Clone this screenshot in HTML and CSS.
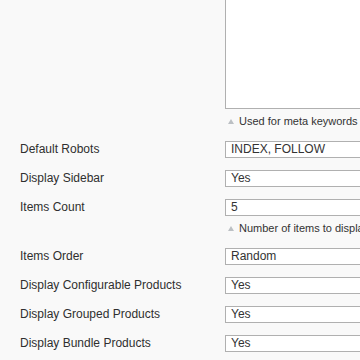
FILE: index.html
```html
<!DOCTYPE html>
<html lang="en">
<head>
  <meta charset="UTF-8">
  <title>Configuration</title>
<link rel="stylesheet" href="styles.css">
</head>
<body>

<div class="form">
  <div class="row">
    <div class="label"></div>
    <div class="field">
      <div class="box textarea"></div>
      <div class="note"><span class="arrow"></span>Used for meta keywords</div>
    </div>
  </div>

  <div class="row">
    <div class="label">Default Robots</div>
    <div class="field"><div class="box">INDEX, FOLLOW</div></div>
  </div>

  <div class="row">
    <div class="label">Display Sidebar</div>
    <div class="field"><div class="box">Yes</div></div>
  </div>

  <div class="row">
    <div class="label">Items Count</div>
    <div class="field">
      <div class="box">5</div>
      <div class="note"><span class="arrow"></span>Number of items to display</div>
    </div>
  </div>

  <div class="row">
    <div class="label">Items Order</div>
    <div class="field"><div class="box">Random</div></div>
  </div>

  <div class="row">
    <div class="label">Display Configurable Products</div>
    <div class="field"><div class="box">Yes</div></div>
  </div>

  <div class="row">
    <div class="label">Display Grouped Products</div>
    <div class="field"><div class="box">Yes</div></div>
  </div>

  <div class="row">
    <div class="label">Display Bundle Products</div>
    <div class="field"><div class="box">Yes</div></div>
  </div>
</div>

</body>
</html>
```

FILE: styles.css
```css
body {
  overflow: hidden;
  margin: 0px;
  background-color: #f9f9f9;
  color: #2f2f2f;
  font-size: 12px;
  font-family: 'Liberation Sans', Arial, sans-serif;
}

.form {
  padding-left: 20px;
  width: 520px;
}

.row {
  display: flex;
  align-items: flex-start;
  margin-bottom: 12px;
}

.label {
  width: 205px;
  flex-shrink: 0;
  line-height: 17px;
}

.field {
  width: 280px;
}

.box {
  box-sizing: border-box;
  height: 17px;
  border: 1px solid #b0b0b0;
  background-color: #ffffff;
  padding: 0px 5px;
  line-height: 15px;
  color: #333333;
  white-space: nowrap;
}

.textarea {
  height: 109px;
  border-top: none;
}

.note {
  display: flex;
  align-items: center;
  padding-top: 4px;
  line-height: 16px;
  font-size: 11px;
  color: #333333;
  white-space: nowrap;
}

/* small grey triangle in front of the hint */
.arrow {
  width: 0px;
  height: 0px;
  border-left: 3px solid transparent;
  border-right: 3px solid transparent;
  border-bottom: 5px solid #bcc0c4;
  margin: 0px 5px 0px 3px;
}
```
